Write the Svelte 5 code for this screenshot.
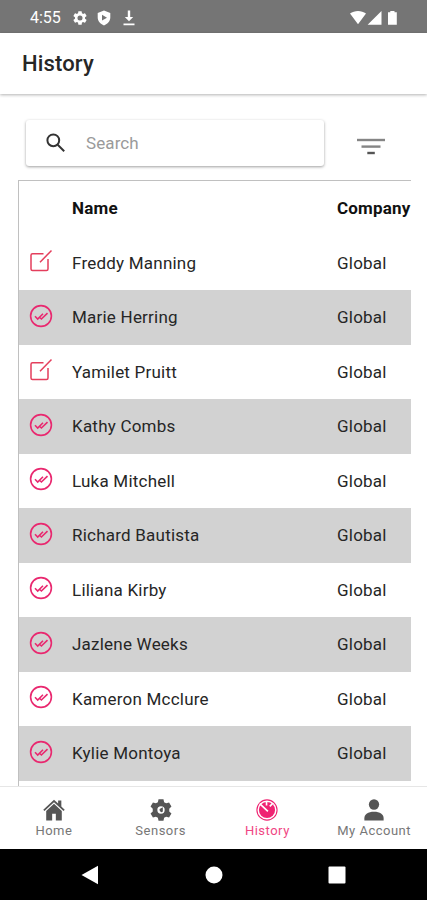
<script lang="ts">
  type Status = 'draft' | 'done';

  const rows: { name: string; company: string; status: Status }[] = [
    { name: 'Freddy Manning', company: 'Global', status: 'draft' },
    { name: 'Marie Herring', company: 'Global', status: 'done' },
    { name: 'Yamilet Pruitt', company: 'Global', status: 'draft' },
    { name: 'Kathy Combs', company: 'Global', status: 'done' },
    { name: 'Luka Mitchell', company: 'Global', status: 'done' },
    { name: 'Richard Bautista', company: 'Global', status: 'done' },
    { name: 'Liliana Kirby', company: 'Global', status: 'done' },
    { name: 'Jazlene Weeks', company: 'Global', status: 'done' },
    { name: 'Kameron Mcclure', company: 'Global', status: 'done' },
    { name: 'Kylie Montoya', company: 'Global', status: 'done' },
  ];

  const tabs = ['Home', 'Sensors', 'History', 'My Account'];
  let active = $state('History');
  let query = $state('');

  const shown = $derived(rows.filter((r) => r.name.toLowerCase().includes(query.toLowerCase())));

  const GEAR =
    'M19.14 12.94c.04-.3.06-.61.06-.94 0-.32-.02-.64-.07-.94l2.03-1.58a.49.49 0 0 0 .12-.61l-1.92-3.32a.49.49 0 0 0-.59-.22l-2.39.96c-.5-.38-1.03-.7-1.62-.94l-.36-2.54a.48.48 0 0 0-.48-.41h-3.84c-.24 0-.43.17-.47.41l-.36 2.54c-.59.24-1.13.57-1.62.94l-2.39-.96c-.22-.08-.47 0-.59.22L2.74 8.87c-.12.21-.08.47.12.61l2.03 1.58c-.05.3-.09.63-.09.94s.02.64.07.94l-2.03 1.58a.49.49 0 0 0-.12.61l1.92 3.32c.12.22.37.29.59.22l2.39-.96c.5.38 1.03.7 1.62.94l.36 2.54c.05.24.24.41.48.41h3.84c.24 0 .44-.17.47-.41l.36-2.54c.59-.24 1.13-.56 1.62-.94l2.39.96c.22.08.47 0 .59-.22l1.92-3.32c.12-.22.07-.47-.12-.61l-2.01-1.58zM12 15.6A3.6 3.6 0 1 1 12 8.4a3.6 3.6 0 0 1 0 7.2z';
</script>

<div class="phone">
  <div class="status">
    <span class="clock">4:55</span>
    <svg class="gear" viewBox="2 2 20 20" width="14" height="14"><path d={GEAR} /></svg>
    <svg class="shield" viewBox="0 0 14 16" width="14" height="16">
      <path fill-rule="evenodd" d="M7 .6 13.3 3v4.6c0 3.6-2.6 6.5-6.3 7.8C3.3 14.1.7 11.2.7 7.600V3zM5 4.800v5.800L10 7.700z" />
    </svg>
    <svg class="download" viewBox="0 0 12 16" width="12" height="16">
      <path d="M4.800.5h2.400v6.500h3L6 11.300 1.800 7h3zM.5 13.500h11v1.700H.5z" />
    </svg>
    <svg class="signals" viewBox="0 0 50 16" width="50" height="16">
      <path d="M1 3.600C5.500 0 12.500 0 17 3.600L9 14.300zM32.500 1v13.700H18.600zM39 2.300h2.300V1h4.200v1.300h2.300v12.400H39z" />
    </svg>
  </div>

  <header>History</header>

  <main>
    <div class="tools">
      <label class="search">
        <svg viewBox="0 0 20 20" width="20" height="20">
          <circle cx="7.300" cy="7.300" r="5.900" />
          <path d="M11.700 11.700 18.200 18.200" />
        </svg>
        <input placeholder="Search" aria-label="Search" bind:value={query} />
      </label>
      <button class="filter" aria-label="Filter">
        <svg viewBox="0 0 28 18" width="28" height="18">
          <path d="M0 2h28" />
          <path d="M4.500 8.600h19" />
          <path class="short" d="M10.300 15h7.500" />
        </svg>
      </button>
    </div>

    <div class="table">
      <div class="row head">
        <span></span>
        <span>Name</span>
        <span>Company</span>
      </div>
      {#each shown as r}
        <div class="row">
          {#if r.status === 'draft'}
            <svg class="mark draft" viewBox="0 0 24 24" width="24" height="24">
              <path d="M14.500 4.700H3.500q-1.500 0-1.500 1.500V20q0 1.500 1.500 1.500h14q1.500 0 1.500-1.500v-10" />
              <path d="M11 13.200 22.500 1.500" />
            </svg>
          {:else}
            <svg class="mark" viewBox="0 0 24 24" width="24" height="24">
              <circle cx="12" cy="12" r="10.400" />
              <path d="M6 12.300 8.700 15 14 9.800M10.800 13.500 12.400 15 18.500 9.200" />
            </svg>
          {/if}
          <span>{r.name}</span>
          <span>{r.company}</span>
        </div>
      {/each}
    </div>
  </main>

  <nav>
    {#each tabs as tab}
      <button class:active={active === tab} onclick={() => (active = tab)}>
        <svg viewBox="0 0 24 24" width="24" height="24">
          {#if tab === 'Home'}
            <path d="M12 .8.3 11.700l1.300 1.300L12 3.600 22.400 13l1.300-1.300-3.700-3.500V1.500h-3.500v3.500z" />
            <path d="M12 5.300 3.500 13v10.500H10v-7.500h4v7.500h6.500V13z" />
          {:else if tab === 'Sensors'}
            <path
              fill-rule="evenodd"
              d="M9.300.3h5.400l.7 3.200 2.200 1.200 3.200-1 2.600 4.600-2.400 2.200v3l2.400 2.200-2.600 4.600-3.200-1-2.200 1.200-.7 3.200H9.300l-.7-3.200-2.200-1.200-3.200 1-2.600-4.600L3 13.500v-3L.6 8.300l2.600-4.600 3.200 1 2.200-1.200zM12 8a4 4 0 1 0 0 8 4 4 0 0 0 0-8z"
            />
            <path d="M12 10.200 14 9v4.500a2 2 0 1 1-2-3.300z" />
          {:else if tab === 'History'}
            <circle class="ring" cx="12" cy="12" r="11" />
            <circle cx="12" cy="12" r="8.800" />
            <path class="cut" d="M4 5 13 13.500M11.500 2.500v4.500M15 8l3-3" />
          {:else}
            <circle cx="12" cy="6" r="5.600" />
            <path d="M1.500 23.500V21c0-4.300 4-7 10.500-7s10.500 2.700 10.500 7v2.500z" />
          {/if}
        </svg>
        <span>{tab}</span>
      </button>
    {/each}
  </nav>

  <div class="system">
    <svg viewBox="0 0 18 20" width="18" height="20"><path d="M17 .7v18.600L.5 10z" /></svg>
    <svg viewBox="0 0 18 18" width="18" height="18"><circle cx="9" cy="9" r="8.500" /></svg>
    <svg viewBox="0 0 18 18" width="18" height="18"><rect x=".5" y=".5" width="17" height="17" rx="1" /></svg>
  </div>
</div>

<style>
  .phone {
    width: 427px;
    height: 900px;
    display: flex;
    flex-direction: column;
    overflow: hidden;
    background: #fff;
    color: #262626;
    font-family: Roboto, sans-serif;
  }
  button {
    border: 0;
    padding: 0;
    background: none;
    font: inherit;
  }
  .status {
    flex: none;
    height: 33px;
    display: flex;
    align-items: center;
    padding: 2px 28px 0 30px;
    box-sizing: border-box;
    background: #757575;
    color: #fff;
    fill: #fff;
  }
  .clock {
    width: 43px;
    font-size: 16px;
    line-height: 20px;
    padding-top: 1px;
  }
  .shield {
    margin-left: 10px;
  }
  .download {
    margin-left: 12px;
  }
  .signals {
    margin-left: auto;
  }
  header {
    flex: none;
    height: 61px;
    padding-left: 22px;
    font-size: 22px;
    font-weight: 500;
    line-height: 61px;
    letter-spacing: 0.15px;
    box-shadow: 0 1px 3px rgba(0, 0, 0, 0.3);
  }
  main {
    flex: 1;
    min-height: 0;
    overflow: hidden;
    padding: 26px 16px 0 18px;
  }
  .tools {
    display: flex;
    align-items: center;
    padding-left: 8px;
  }
  .search {
    width: 298px;
    height: 46px;
    display: flex;
    align-items: center;
    gap: 21px;
    padding-left: 20px;
    box-sizing: border-box;
    border-radius: 3px;
    box-shadow: 0 1px 3px rgba(0, 0, 0, 0.38);
  }
  .search svg {
    fill: none;
    stroke: #333;
    stroke-width: 2;
  }
  input {
    width: 200px;
    border: 0;
    outline: 0;
    padding: 0;
    margin-left: -1px;
    font: 17px Roboto, sans-serif;
    letter-spacing: 0.1px;
  }
  input::placeholder {
    color: #9a9a9a;
  }
  .filter {
    margin: 7px 0 0 33px;
    height: 18px;
  }
  .filter svg {
    display: block;
    stroke: #858585;
    stroke-width: 2.4;
  }
  .filter .short {
    stroke: #555;
  }
  .table {
    margin-top: 14px;
    height: 620px;
    overflow: hidden;
    border: solid #c0c0c0;
    border-width: 1px 0 0 1px;
  }
  .row {
    display: grid;
    grid-template-columns: 53px 265px 1fr;
    align-items: center;
    height: 54.500px;
    font-size: 17px;
    letter-spacing: 0.22px;
    white-space: nowrap;
  }
  .head {
    color: #111;
    font-weight: 700;
    font-size: 17px;
    letter-spacing: 0.2px;
  }
  .row:nth-child(odd):not(.head) {
    background: #d2d2d2;
  }
  .mark {
    margin: -3px 0 0 10px;
    fill: none;
    stroke: #e9286f;
    stroke-width: 1.600;
  }
  .draft {
    stroke: #e43e5c;
    stroke-width: 1.500;
  }
  nav {
    flex: none;
    height: 63px;
    display: grid;
    grid-template-columns: repeat(4, 1fr);
    box-sizing: border-box;
    border-top: 1px solid #e6e6e6;
    background: #fff;
  }
  nav button {
    display: flex;
    flex-direction: column;
    align-items: center;
    padding: 12px 0 0 1px;
    color: #777;
    font-size: 13px;
    line-height: 16px;
    letter-spacing: 0.5px;
    white-space: nowrap;
  }
  nav svg {
    flex: none;
    width: 22px;
    height: 22px;
    margin-bottom: 2px;
    fill: #555;
  }
  nav .active {
    color: #f04583;
  }
  .active svg {
    fill: #ef2372;
  }
  .active .ring {
    fill: none;
    stroke: #ef2372;
    stroke-width: 1.200;
  }
  .cut {
    fill: none;
    stroke: #fff;
    stroke-width: 1.800;
  }
  .system {
    flex: none;
    height: 51px;
    display: flex;
    align-items: center;
    justify-content: space-between;
    padding: 0 81px 0 81px;
    box-sizing: border-box;
    background: #000;
    fill: #fff;
  }
</style>
